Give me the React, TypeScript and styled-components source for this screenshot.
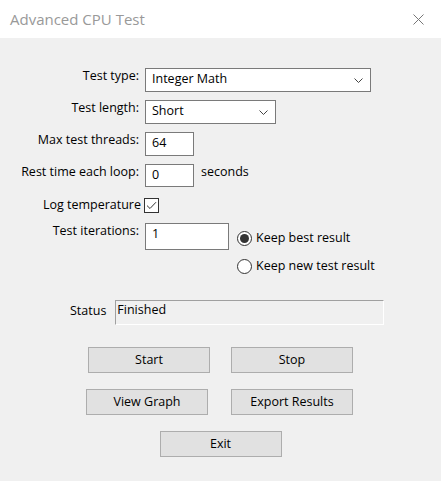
import styled, { createGlobalStyle } from "styled-components";

const GlobalStyle = createGlobalStyle`
  html, body {
    margin: 0;
    padding: 0;
    background: #f0f0f0;
  }
  body {
    font-family: "Open Sans", "Noto Sans", "Liberation Sans", sans-serif;
    color: #000;
  }
  * {
    box-sizing: border-box;
  }
`;

const Chevron = () => (
  <svg width="9" height="5" viewBox="0 0 9 5">
    <path d="M0.5 0.5 L4.5 4.5 L8.5 0.5" fill="none" stroke="#444" strokeWidth="1" />
  </svg>
);

const CloseIcon = () => (
  <svg width="11" height="11" viewBox="0 0 11 11">
    <path d="M0.5 0.5 L10.5 10.5 M10.5 0.5 L0.5 10.5" fill="none" stroke="#777" strokeWidth="1" />
  </svg>
);

const CheckMark = () => (
  <svg width="11" height="9" viewBox="0 0 11 9">
    <path d="M1 4.6 L4 7.5 L10 1.2" fill="none" stroke="#333" strokeWidth="1" />
  </svg>
);

export default function App() {
  return (
    <>
      <GlobalStyle />
      <Window>
        <TitleBar>
          <Title>Advanced CPU Test</Title>
          <CloseButton>
            <CloseIcon />
          </CloseButton>
        </TitleBar>

        <Body>
          <Form>
            <Row>
              <Label>Test type:</Label>
              <Combo $width={226}>
                <ComboValue>Integer Math</ComboValue>
                <ComboArrow>
                  <Chevron />
                </ComboArrow>
              </Combo>
            </Row>
            <Row>
              <Label>Test length:</Label>
              <Combo $width={131}>
                <ComboValue>Short</ComboValue>
                <ComboArrow>
                  <Chevron />
                </ComboArrow>
              </Combo>
            </Row>
            <Row>
              <Label>Max test threads:</Label>
              <TextBox $width={49} $height={24}>64</TextBox>
            </Row>
            <Row>
              <Label>Rest time each loop:</Label>
              <TextBox $width={49} $height={23}>0</TextBox>
              <Unit>seconds</Unit>
            </Row>
            <CheckRow>
              <Label $width={141} $gap={3}>Log temperature</Label>
              <CheckBox>
                <CheckMark />
              </CheckBox>
            </CheckRow>
            <Row>
              <Label>Test iterations:</Label>
              <TextBox $width={84} $height={27}>1</TextBox>
              <RadioGroup>
                <RadioItem>
                  <RadioCircle $checked />
                  <span>Keep best result</span>
                </RadioItem>
                <RadioItem>
                  <RadioCircle />
                  <span>Keep new test result</span>
                </RadioItem>
              </RadioGroup>
            </Row>
          </Form>

          <StatusRow>
            <StatusLabel>Status</StatusLabel>
            <StatusBox>Finished</StatusBox>
          </StatusRow>

          <Buttons>
            <ButtonRow $indent={88} $gap={21}>
              <Button>Start</Button>
              <Button>Stop</Button>
            </ButtonRow>
            <ButtonRow $indent={86} $gap={23}>
              <Button>View Graph</Button>
              <Button>Export Results</Button>
            </ButtonRow>
            <ButtonRow $center>
              <Button>Exit</Button>
            </ButtonRow>
          </Buttons>
        </Body>
      </Window>
    </>
  );
}

const Window = styled.div`
  width: 441px;
  height: 481px;
  display: flex;
  flex-direction: column;
  background: #f0f0f0;
  overflow: hidden;
  font-size: 12.5px;
  line-height: 16px;
`;

const TitleBar = styled.div`
  height: 38px;
  flex: none;
  background: #fff;
  display: flex;
  align-items: center;
  justify-content: space-between;
  padding-left: 10px;
`;

const Title = styled.div`
  font-size: 15px;
  line-height: 20px;
  color: #999;
  margin-top: -1px;
`;

const CloseButton = styled.div`
  width: 46px;
  height: 38px;
  display: flex;
  align-items: center;
  justify-content: center;
`;

const Body = styled.div`
  flex: 1;
  display: flex;
  flex-direction: column;
  padding-top: 30px;
`;

const Form = styled.div`
  display: flex;
  flex-direction: column;
  gap: 8px;
`;

const Row = styled.div`
  display: flex;
  align-items: flex-start;
`;

const CheckRow = styled.div`
  display: flex;
  align-items: center;
  height: 22px;
  margin-top: -1px;
  margin-bottom: -1px;
`;

const Label = styled.div<{ $width?: number; $gap?: number }>`
  width: ${({ $width }) => $width ?? 139}px;
  margin-right: ${({ $gap }) => $gap ?? 6}px;
  text-align: right;
  white-space: nowrap;
  flex: none;
`;

const Combo = styled.div<{ $width: number }>`
  width: ${({ $width }) => $width}px;
  height: 24px;
  border: 1px solid #7a7a7a;
  background: #fff;
  display: flex;
  justify-content: space-between;
`;

const ComboValue = styled.span`
  padding: 2px 0 0 6px;
`;

const ComboArrow = styled.span`
  align-self: center;
  display: flex;
  margin-right: 7px;
`;

const TextBox = styled.div<{ $width: number; $height: number }>`
  width: ${({ $width }) => $width}px;
  height: ${({ $height }) => $height}px;
  border: 1px solid #7a7a7a;
  background: #fff;
  padding: 2px 0 0 6px;
  flex: none;
`;

const Unit = styled.span`
  margin-left: 7px;
`;

const CheckBox = styled.div`
  width: 15px;
  height: 15px;
  border: 1px solid #333;
  background: #fff;
  display: flex;
  align-items: center;
  justify-content: center;
`;

const RadioGroup = styled.div`
  display: flex;
  flex-direction: column;
  margin-left: 8px;
  padding-top: 1px;
`;

const RadioItem = styled.div`
  height: 28px;
  display: flex;
  align-items: center;
  gap: 4px;
  white-space: nowrap;
`;

const RadioCircle = styled.span<{ $checked?: boolean }>`
  width: 15px;
  height: 15px;
  border-radius: 50%;
  border: 1px solid #333;
  background: #fff;
  display: flex;
  align-items: center;
  justify-content: center;

  &::after {
    content: "";
    width: 9px;
    height: 9px;
    border-radius: 50%;
    background: ${({ $checked }) => ($checked ? "#333" : "transparent")};
  }
`;

const StatusRow = styled.div`
  display: flex;
  align-items: flex-start;
  margin-top: 20px;
  padding-left: 70px;
`;

const StatusLabel = styled.div`
  padding-top: 3px;
  margin-right: 9px;
`;

const StatusBox = styled.div`
  width: 269px;
  height: 25px;
  border-top: 1px solid #a0a0a0;
  border-left: 1px solid #a0a0a0;
  border-right: 1px solid #fff;
  border-bottom: 1px solid #fff;
  padding: 1px 0 0 1px;
`;

const Buttons = styled.div`
  display: flex;
  flex-direction: column;
  gap: 16px;
  margin-top: 22px;
`;

const ButtonRow = styled.div<{ $indent?: number; $gap?: number; $center?: boolean }>`
  display: flex;
  justify-content: ${({ $center }) => ($center ? "center" : "flex-start")};
  padding-left: ${({ $indent }) => $indent ?? 0}px;
  gap: ${({ $gap }) => $gap ?? 0}px;
`;

const Button = styled.div`
  width: 122px;
  height: 26px;
  background: #e1e1e1;
  border: 1px solid #adadad;
  display: flex;
  align-items: center;
  justify-content: center;
  white-space: nowrap;
`;
